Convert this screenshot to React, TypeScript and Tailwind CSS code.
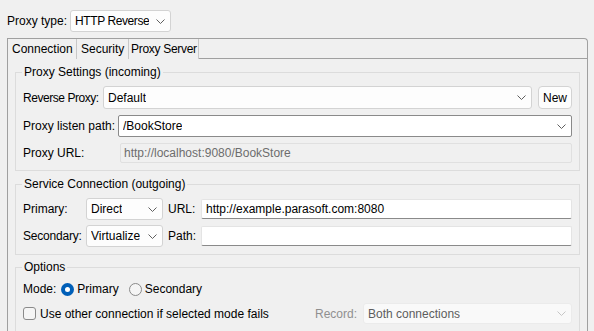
import clsx from 'clsx'

function Chevron({ light }: { light?: boolean }) {
  return (
    <svg width="9" height="5" viewBox="0 0 9 5" className="shrink-0">
      <path d="M0.5 0.5 L4.5 4.5 L8.5 0.5" fill="none" stroke={light ? '#c6c6c6' : '#5f5f5f'} strokeWidth="1" />
    </svg>
  )
}

type ComboKind = 'read' | 'edit' | 'off'

function Combo({ value, kind = 'read', className }: { value: string; kind?: ComboKind; className?: string }) {
  return (
    <div
      className={clsx(
        'flex shrink-0 items-center justify-between border pl-[4px] pr-[5px]',
        kind === 'read' && 'bg-[#fdfdfd] border-[#d3d3d3] rounded-[3px]',
        kind === 'edit' && 'bg-white border-[#8a8a8a] rounded-[2px]',
        kind === 'off' && 'bg-[#f9f9f9] border-[#ebebeb] rounded-[3px] text-[#5d5d5d]',
        className,
      )}
    >
      <span className="overflow-hidden">{value}</span>
      <Chevron light={kind === 'off'} />
    </div>
  )
}

function Field({ value, className }: { value?: string; className?: string }) {
  return (
    <div className={clsx('flex items-center bg-white border border-[#e4e4e4] border-b-[#8a8a8a] rounded-[2px] px-[4px]', className)}>
      {value}
    </div>
  )
}

function Group({ title, children, className }: { title: string; children: React.ReactNode; className?: string }) {
  return (
    <fieldset className={clsx('mx-[7px] border border-[#dcdcdc] px-[7px] pt-[6px]', className)}>
      <legend className="-ml-[1px] px-[2px] leading-[16px]">{title}</legend>
      {children}
    </fieldset>
  )
}

function Radio({ checked, label }: { checked?: boolean; label: string }) {
  return (
    <div className="flex items-center gap-[3px]">
      {checked ? (
        <span className="flex h-[13px] w-[13px] items-center justify-center rounded-full bg-[#005fb8]">
          <span className="h-[5px] w-[5px] rounded-full bg-white" />
        </span>
      ) : (
        <span className="h-[13px] w-[13px] rounded-full border border-[#8a8a8a] bg-[#f5f5f5]" />
      )}
      <span>{label}</span>
    </div>
  )
}

export default function App() {
  return (
    <div className="h-[331px] w-[594px] overflow-hidden whitespace-nowrap bg-[#f0f0f0] font-['Liberation_Sans',Arial,sans-serif] text-[12px] leading-[14px] text-black">
      <div className="flex items-center pl-[7px] pt-[10px]">
        <span className="w-[63px] shrink-0">Proxy type:</span>
        <Combo value="HTTP Reverse" className="h-[22px] w-[101px] tracking-[-0.4px]" />
      </div>

      <div className="ml-[7px] mt-[6px] h-[300px] w-[581px] rounded-tr-[4px] border border-b-0 border-[#a0a0a0]">
        <div className="flex h-[20px]">
          <div className="flex w-[69px] shrink-0 items-center border-r border-[#c8c8c8] pl-[4px]">Connection</div>
          <div className="flex w-[52px] shrink-0 items-center border-r border-[#c8c8c8] pl-[4px]">Security</div>
          <div className="flex w-[70px] shrink-0 items-center border-r border-[#c8c8c8] pl-[2px] tracking-[-0.3px]">Proxy Server</div>
          <div className="flex-1 border-b border-[#a0a0a0]" />
        </div>

        <Group title="Proxy Settings (incoming)" className="mt-[5px] pb-[7px]">
          <div className="flex flex-col gap-[6px]">
            <div className="flex h-[23px] items-center">
              <span className="w-[80px] shrink-0 tracking-[-0.45px]">Reverse Proxy:</span>
              <Combo value="Default" className="h-[23px] flex-1" />
              <button className="ml-[6px] h-[23px] w-[34px] shrink-0 rounded-[4px] border border-[#d3d3d3] bg-[#fdfdfd]">New</button>
            </div>
            <div className="flex h-[22px] items-center">
              <span className="w-[95px] shrink-0">Proxy listen path:</span>
              <Combo value="/BookStore" kind="edit" className="h-[22px] flex-1" />
            </div>
            <div className="flex h-[20px] items-center">
              <span className="w-[97px] shrink-0">Proxy URL:</span>
              <div className="flex h-[20px] flex-1 items-center rounded-[2px] border border-[#e0e0e0] bg-[#f0f0f0] px-[3px] text-[#6d6d6d]">
                http://localhost:9080/BookStore
              </div>
            </div>
          </div>
        </Group>

        <Group title="Service Connection (outgoing)" className="mt-[5px] pb-[7px]">
          <div className="flex flex-col gap-[5px]">
            <div className="flex h-[22px] items-center">
              <span className="w-[63px] shrink-0">Primary:</span>
              <Combo value="Direct" className="h-[22px] w-[77px]" />
              <span className="w-[38px] shrink-0 pl-[5px]">URL:</span>
              <Field value="http://example.parasoft.com:8080" className="h-[20px] flex-1" />
            </div>
            <div className="flex h-[22px] items-center">
              <span className="w-[63px] shrink-0 tracking-[-0.2px]">Secondary:</span>
              <Combo value="Virtualize" className="h-[22px] w-[77px]" />
              <span className="w-[38px] shrink-0 pl-[5px]">Path:</span>
              <Field className="h-[20px] flex-1" />
            </div>
          </div>
        </Group>

        <Group title="Options" className="mt-[4px] pb-[7px]">
          <div className="flex flex-col">
            <div className="flex h-[16px] items-center">
              <span className="mr-[5px]">Mode:</span>
              <Radio checked label="Primary" />
              <div className="ml-[10px]">
                <Radio label="Secondary" />
              </div>
            </div>
            <div className="mt-[6px] flex h-[21px] items-center">
              <span className="h-[13px] w-[13px] shrink-0 rounded-[3px] border border-[#8a8a8a] bg-[#f5f5f5]" />
              <span className="ml-[4px]">Use other connection if selected mode fails</span>
              <span className="ml-auto mr-[6px] text-[#8f8f8f]">Record:</span>
              <Combo value="Both connections" kind="off" className="h-[21px] w-[209px]" />
            </div>
            <div className="mt-[7px] flex justify-end pr-[2px]">
              <button aria-label="more" className="h-[23px] w-[40px] rounded-[4px] border border-[#d3d3d3] bg-[#fdfdfd]" />
            </div>
          </div>
        </Group>
      </div>
    </div>
  )
}
